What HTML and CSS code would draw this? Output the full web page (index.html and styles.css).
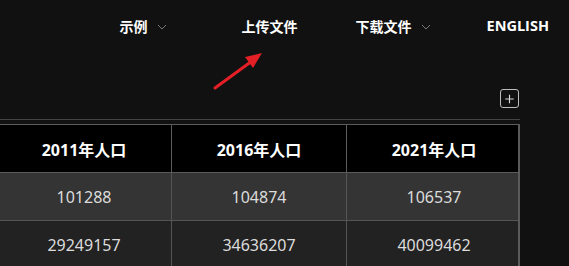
FILE: index.html
```html
<!DOCTYPE html>
<html lang="zh">
<head>
<meta charset="utf-8">
<title>人口数据</title>
<link rel="stylesheet" href="styles.css">
</head>
<body>
<header class="topbar">
  <nav class="nav">
    <a class="nav-item nav-first">示例<svg class="chev" viewBox="0 0 10 6" width="10" height="6"><path d="M1 1 L5 5 L9 1" fill="none" stroke="#7a7a7a" stroke-width="1"/></svg></a>
    <a class="nav-item">上传文件</a>
    <a class="nav-item">下载文件<svg class="chev" viewBox="0 0 10 6" width="10" height="6"><path d="M1 1 L5 5 L9 1" fill="none" stroke="#7a7a7a" stroke-width="1"/></svg></a>
    <a class="nav-item nav-en">ENGLISH</a>
  </nav>
  <svg class="pointer" viewBox="0 0 60 50" width="60" height="50">
    <line x1="5" y1="38" x2="42" y2="11" stroke="#e41f26" stroke-width="3" stroke-linecap="round"/>
    <polygon points="52,3 35,7 43,18" fill="#e41f26"/>
  </svg>
</header>
<main class="content">
  <div class="toolbar">
    <button class="add-btn" aria-label="添加"><svg viewBox="0 0 18 18" width="18" height="18"><path d="M9 4.5 V13.5 M4.5 9 H13.5" stroke="#d8d8d8" stroke-width="1.2"/></svg></button>
  </div>
  <div class="table-wrap">
    <table class="data">
      <thead>
        <tr><th>2011年人口</th><th>2016年人口</th><th>2021年人口</th></tr>
      </thead>
      <tbody>
        <tr class="odd"><td>101288</td><td>104874</td><td>106537</td></tr>
        <tr class="even"><td>29249157</td><td>34636207</td><td>40099462</td></tr>
      </tbody>
    </table>
  </div>
</main>
</body>
</html>
```

FILE: styles.css
```css
html, body {
  margin: 0;
  padding: 0;
  background: #111111;
  overflow: hidden;
}
body {
  width: 569px;
  height: 266px;
  font-family: "Noto Sans", "Noto Sans CJK SC", sans-serif;
  color: #fff;
}
.topbar {
  position: relative;
  height: 54px;
}
.nav {
  display: flex;
  justify-content: flex-end;
  align-items: center;
  height: 52px;
  padding-right: 20px;
}
.nav-item {
  display: flex;
  align-items: center;
  font-family: "Noto Sans CJK SC", sans-serif;
  font-size: 14px;
  font-weight: 700;
  color: #ffffff;
  margin-left: 58px;
  line-height: 20px;
}
.nav-first { margin-left: 0; margin-right: 17px; }
.nav-en {
  font-family: "Open Sans", "Noto Sans", sans-serif;
  font-weight: 700;
  font-size: 14.5px;
  margin-left: 56px;
}
.chev {
  margin-left: 9px;
  margin-top: 1px;
}
.pointer {
  position: absolute;
  left: 210px;
  top: 50px;
}
.content {
  width: 520px;
}
.toolbar {
  display: flex;
  justify-content: flex-end;
  padding-top: 35px;
  height: 30px;
  border-bottom: 1px solid #444;
  box-sizing: content-box;
}
.add-btn {
  width: 19px;
  height: 19px;
  padding: 0;
  margin-right: 1px;
  background: transparent;
  border: 1px solid #bdbdbd;
  border-radius: 3px;
  display: flex;
  align-items: center;
  justify-content: center;
  box-sizing: border-box;
}
.add-btn svg { display: block; }
.table-wrap {
  margin-top: 4px;
  overflow: hidden;
  border-right: 2px solid #5a5a5a;
}
.data {
  border-collapse: collapse;
  margin-left: -4px;
  table-layout: fixed;
  width: 523px;
}
.data th, .data td {
  width: 174px;
  height: 47px;
  text-align: center;
  border: 1px solid #555;
  padding: 0;
  font-size: 16px;
}
.data tr > :last-child { border-right: none; }
.data th {
  background: #000;
  color: #fff;
  font-weight: 700;
  border-color: #5c5c5c;
}
.data td {
  color: #dcdcdc;
  font-weight: 400;
}
.odd td { background: #343434; }
.even td { background: #222222; }
```
